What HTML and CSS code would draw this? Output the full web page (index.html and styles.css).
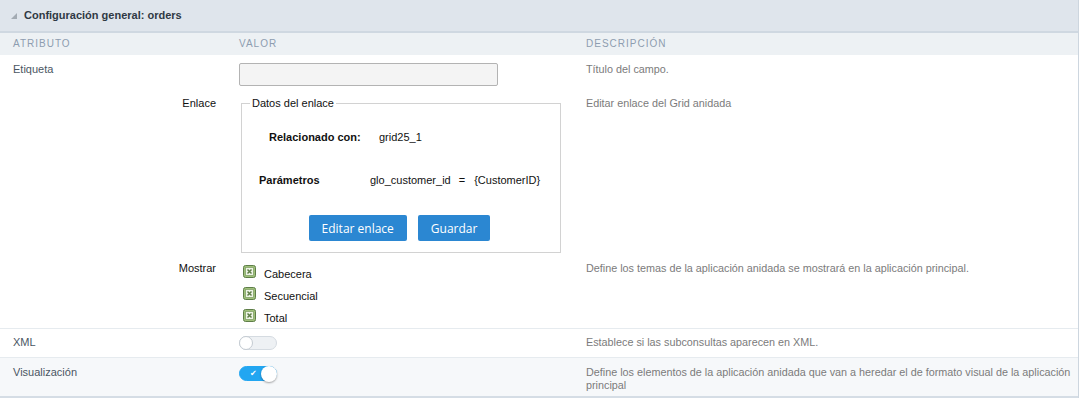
FILE: index.html
```html
<!DOCTYPE html>
<html lang="es">
<head>
<meta charset="utf-8">
<title>Configuración general: orders</title>
<link rel="stylesheet" href="styles.css">
</head>
<body>
<div class="panel">
  <div class="panel-title"><span class="tri"></span>Configuración general: orders</div>
  <div class="row head">
    <div class="cell">ATRIBUTO</div>
    <div class="cell">VALOR</div>
    <div class="cell">DESCRIPCIÓN</div>
  </div>

  <div class="group">
    <div class="row r-etiqueta">
      <div class="cell attr">Etiqueta</div>
      <div class="cell val"><input class="text-input" type="text"></div>
      <div class="cell desc">Título del campo.</div>
    </div>

    <div class="row r-enlace">
      <div class="cell attr right">Enlace</div>
      <div class="cell val">
        <fieldset class="link-box">
          <legend>Datos del enlace</legend>
          <div class="lb-row lb-rel">
            <span class="lb-label">Relacionado con:</span>
            <span>grid25_1</span>
          </div>
          <div class="lb-row lb-par">
            <span class="lb-label">Parámetros</span>
            <span>glo_customer_id</span><span class="eq">=</span><span>{CustomerID}</span>
          </div>
          <div class="lb-buttons">
            <button class="btn" type="button">Editar enlace</button>
            <button class="btn" type="button">Guardar</button>
          </div>
        </fieldset>
      </div>
      <div class="cell desc">Editar enlace del Grid anidada</div>
    </div>

    <div class="row r-mostrar">
      <div class="cell attr right">Mostrar</div>
      <div class="cell val">
        <ul class="checks">
          <li class="check"><svg class="cb" width="13" height="13" viewBox="0 0 13 13"><rect x="0.5" y="0.5" width="12" height="12" rx="2" fill="#9fc07a" stroke="#5e7e48"/><rect x="2.5" y="2.5" width="8" height="8" fill="#eef4e6" stroke="#86a56a" stroke-width="0.8"/><path d="M4.5 4.5 L8.5 8.5 M8.5 4.5 L4.5 8.5" stroke="#5d7d45" stroke-width="1.5"/></svg><span>Cabecera</span></li>
          <li class="check"><svg class="cb" width="13" height="13" viewBox="0 0 13 13"><rect x="0.5" y="0.5" width="12" height="12" rx="2" fill="#9fc07a" stroke="#5e7e48"/><rect x="2.5" y="2.5" width="8" height="8" fill="#eef4e6" stroke="#86a56a" stroke-width="0.8"/><path d="M4.5 4.5 L8.5 8.5 M8.5 4.5 L4.5 8.5" stroke="#5d7d45" stroke-width="1.5"/></svg><span>Secuencial</span></li>
          <li class="check"><svg class="cb" width="13" height="13" viewBox="0 0 13 13"><rect x="0.5" y="0.5" width="12" height="12" rx="2" fill="#9fc07a" stroke="#5e7e48"/><rect x="2.5" y="2.5" width="8" height="8" fill="#eef4e6" stroke="#86a56a" stroke-width="0.8"/><path d="M4.5 4.5 L8.5 8.5 M8.5 4.5 L4.5 8.5" stroke="#5d7d45" stroke-width="1.5"/></svg><span>Total</span></li>
        </ul>
      </div>
      <div class="cell desc">Define los temas de la aplicación anidada se mostrará en la aplicación principal.</div>
    </div>
  </div>

  <div class="row r-xml">
    <div class="cell attr">XML</div>
    <div class="cell val"><span class="toggle"></span></div>
    <div class="cell desc">Establece si las subconsultas aparecen en XML.</div>
  </div>

  <div class="row r-vis">
    <div class="cell attr">Visualización</div>
    <div class="cell val"><span class="toggle on"><span class="tick">✔</span></span></div>
    <div class="cell desc">Define los elementos de la aplicación anidada que van a heredar el de formato visual de la aplicación principal</div>
  </div>
</div>
</body>
</html>
```

FILE: styles.css
```css
html, body {
  margin: 0;
  padding: 0;
  background: #ffffff;
}

body {
  font-family: "Liberation Sans", Arial, sans-serif;
  font-size: 11px;
  line-height: 13px;
  color: #4a5663;
}

.panel {
  width: 1079px;
  box-sizing: border-box;
  border-right: 1px solid #cdd6df;
}

.panel-title {
  display: flex;
  align-items: center;
  height: 31px;
  background: #dfe5ec;
  border-bottom: 2px solid #cfd8e1;
  font-weight: bold;
  color: #2f3944;
}

.tri {
  width: 0;
  height: 0;
  border-style: solid;
  border-width: 0 0 6px 6px;
  border-color: transparent transparent #a3abb3 transparent;
  margin: 0 7px 0 11px;
}

.row {
  display: grid;
  grid-template-columns: 226px 347px 1fr;
}

.cell {
  padding-left: 13px;
  min-width: 0;
}

.head {
  height: 22px;
  line-height: 22px;
  background: #edf1f4;
  font-size: 10px;
  letter-spacing: 1px;
  color: #8d9db0;
}

.attr.right {
  text-align: right;
  padding-left: 0;
  padding-right: 10px;
  color: #111;
}

.desc {
  color: #7b7b7b;
  font-size: 10.8px;
  padding-right: 4px;
}

.group {
  border-bottom: 1px solid #e6ebef;
}

.r-etiqueta {
  padding: 8px 0 6px;
}

.text-input {
  display: block;
  box-sizing: border-box;
  width: 259px;
  height: 23px;
  margin: 0;
  background: #f4f4f4;
  border: 1px solid #b3b3b3;
  border-radius: 2px;
}

.r-enlace {
  padding: 5px 0 4px;
}

.link-box {
  width: 320px;
  box-sizing: border-box;
  margin: 0 0 0 2px;
  padding: 0 0 11px;
  border: 1px solid #d2d2d2;
  color: #111;
}

.link-box legend {
  margin-left: 8px;
  padding: 0 2px;
  line-height: 13px;
  color: #111;
}

.lb-row {
  display: flex;
  align-items: center;
}

.lb-label {
  font-weight: bold;
}

.lb-rel {
  margin-top: 21px;
  padding-left: 27px;
}

.lb-rel .lb-label {
  width: 110px;
}

.lb-par {
  margin-top: 30px;
  padding-left: 17px;
}

.lb-par .lb-label {
  width: 111px;
}

.eq {
  margin: 0 9px 0 8px;
}

.lb-buttons {
  display: flex;
  justify-content: center;
  gap: 11px;
  margin-top: 28px;
  padding-right: 3px;
}

.btn {
  height: 26px;
  padding: 0 13px;
  border: 0;
  border-radius: 2px;
  background: #2b87d2;
  color: #ffffff;
  font-family: "Open Sans", sans-serif;
  font-size: 12px;
}

.r-mostrar {
  padding: 5px 0 3px;
}

.checks {
  list-style: none;
  margin: 3px 0 0 4px;
  padding: 0;
  display: flex;
  flex-direction: column;
  gap: 6px;
}

.check {
  display: flex;
  align-items: flex-start;
  gap: 8px;
  color: #111;
}

.check span {
  margin-top: 3px;
}

.cb {
  display: block;
  flex: none;
}

.r-xml {
  padding: 7px 0;
  border-bottom: 1px solid #e6ebef;
}

.r-vis {
  padding: 8px 0 4px;
  background: #f6f8fa;
  border-bottom: 2px solid #d5dde5;
}

.toggle {
  position: relative;
  display: block;
  width: 38px;
  height: 14px;
  box-sizing: border-box;
  border-radius: 8px;
  background: #eef1f4;
  border: 1px solid #d5dbe1;
}

.toggle::after {
  content: "";
  position: absolute;
  left: -1px;
  top: -1px;
  width: 14px;
  height: 14px;
  box-sizing: border-box;
  border-radius: 50%;
  background: #ffffff;
  border: 1px solid #c4cbd2;
}

.toggle.on {
  height: 15px;
  background: #22a6f1;
  border-color: #22a6f1;
}

.toggle.on::after {
  left: auto;
  right: -1px;
  top: -1px;
  width: 16px;
  height: 16px;
  border: 0;
  box-shadow: 0 1px 2px rgba(0, 0, 0, 0.35);
}

.tick {
  position: absolute;
  left: 10px;
  top: 0;
  font-size: 8px;
  line-height: 13px;
  color: #ffffff;
  font-family: "DejaVu Sans", sans-serif;
}
```
